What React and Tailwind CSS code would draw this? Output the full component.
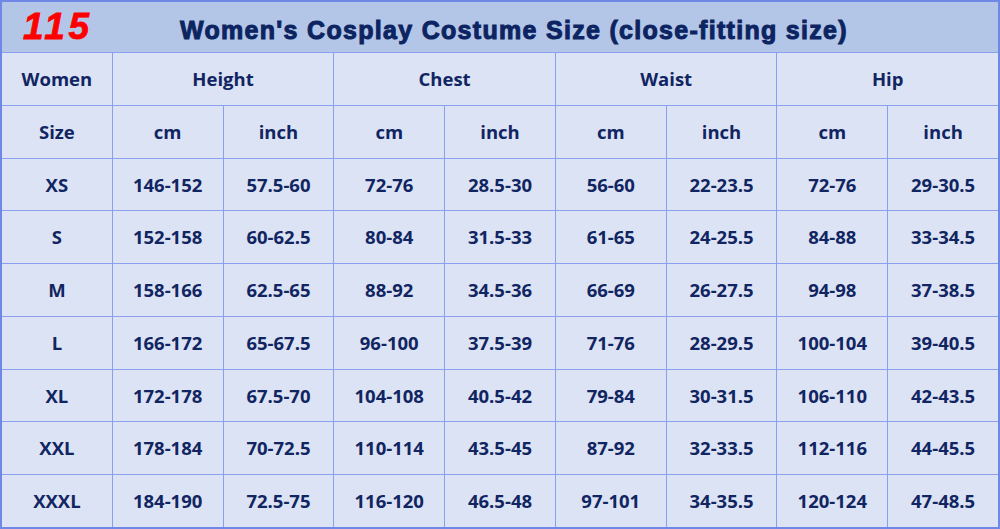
import React from "react";

const rows = [
  ["XS", "146-152", "57.5-60", "72-76", "28.5-30", "56-60", "22-23.5", "72-76", "29-30.5"],
  ["S", "152-158", "60-62.5", "80-84", "31.5-33", "61-65", "24-25.5", "84-88", "33-34.5"],
  ["M", "158-166", "62.5-65", "88-92", "34.5-36", "66-69", "26-27.5", "94-98", "37-38.5"],
  ["L", "166-172", "65-67.5", "96-100", "37.5-39", "71-76", "28-29.5", "100-104", "39-40.5"],
  ["XL", "172-178", "67.5-70", "104-108", "40.5-42", "79-84", "30-31.5", "106-110", "42-43.5"],
  ["XXL", "178-184", "70-72.5", "110-114", "43.5-45", "87-92", "32-33.5", "112-116", "44-45.5"],
  ["XXXL", "184-190", "72.5-75", "116-120", "46.5-48", "97-101", "34-35.5", "120-124", "47-48.5"],
];

const Cell = ({ children, span }) => (
  <div
    className={`bg-[#dce3f4] flex items-center justify-center text-[18.5px] font-bold text-[#102561] ${
      span ? "col-span-2" : ""
    }`}
  >
    {children}
  </div>
);

export default function App() {
  return (
    <div
      className="w-[1000px] h-[529px] border-2 border-[#6f88e8] bg-[#8aa0ee] flex flex-col gap-px"
      style={{ fontFamily: '"Open Sans", "Noto Sans", sans-serif' }}
    >
      {/* title bar */}
      <div className="h-[50px] shrink-0 bg-[#b4c6e7] flex items-center relative">
        <span
          className="absolute left-[21px] top-[6px] text-[37px] italic font-bold text-[#ff0000] leading-none tracking-[3.5px] [-webkit-text-stroke:0.8px_#ff0000]"
          style={{ fontFamily: '"Liberation Sans", Arial, sans-serif' }}
        >
          115
        </span>
        <h1
          className="w-full text-center pl-[28px] pt-[8px] text-[25px] font-bold text-[#0c2461] tracking-[1.3px] [-webkit-text-stroke:1px_#0c2461]"
          style={{ fontFamily: '"Liberation Sans", Arial, sans-serif' }}
        >
          Women's Cosplay Costume Size (close-fitting size)
        </h1>
      </div>

      {/* size grid */}
      <div className="flex-1 grid grid-cols-9 grid-rows-9 gap-px">
        <Cell>Women</Cell>
        <Cell span>Height</Cell>
        <Cell span>Chest</Cell>
        <Cell span>Waist</Cell>
        <Cell span>Hip</Cell>

        <Cell>Size</Cell>
        {["cm", "inch", "cm", "inch", "cm", "inch", "cm", "inch"].map((u, i) => (
          <Cell key={i}>{u}</Cell>
        ))}

        {rows.map((r) =>
          r.map((v, i) => <Cell key={r[0] + i}>{v}</Cell>)
        )}
      </div>
    </div>
  );
}
